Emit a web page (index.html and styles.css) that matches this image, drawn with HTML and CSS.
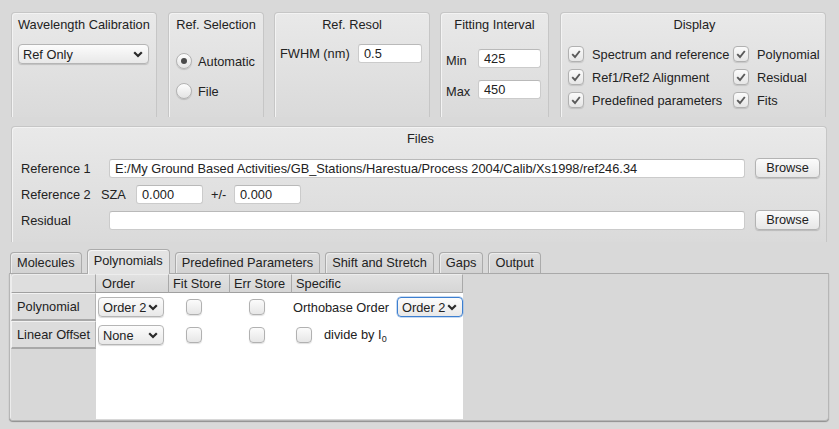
FILE: index.html
```html
<!DOCTYPE html>
<html>
<head>
<meta charset="utf-8">
<link rel="stylesheet" href="styles.css">
</head>
<body>
<div class="top">
  <section class="group g-wave">
    <div class="gtitle">Wavelength Calibration</div>
    <div class="combo wave-combo"><span>Ref Only</span><svg class="chev" width="10" height="7" viewBox="0 0 10 7"><path d="M1.2 1.2 L5 5 L8.8 1.2" fill="none" stroke="#2a2a2a" stroke-width="2.2"/></svg></div>
  </section>
  <section class="group g-refsel">
    <div class="gtitle">Ref. Selection</div>
    <div class="radio-row r1"><span class="radio checked"></span>Automatic</div>
    <div class="radio-row r2"><span class="radio"></span>File</div>
  </section>
  <section class="group g-resol">
    <div class="gtitle">Ref. Resol</div>
    <div class="field-row"><span class="flabel">FWHM (nm)</span><span class="input resol-in">0.5</span></div>
  </section>
  <section class="group g-fit">
    <div class="gtitle">Fitting Interval</div>
    <div class="fit-row f1"><span class="fit-label">Min</span><span class="input fit-in">425</span></div>
    <div class="fit-row f2"><span class="fit-label">Max</span><span class="input fit-in">450</span></div>
  </section>
  <section class="group g-display">
    <div class="gtitle">Display</div>
    <div class="disp-grid">
      <div class="chk-row"><span class="check"><svg width="14" height="14" viewBox="0 0 14 14"><path d="M3.2 7.2 L6 10 L10.8 4" fill="none" stroke="#5a5a5a" stroke-width="1.9"/></svg></span>Spectrum and reference</div>
      <div class="chk-row"><span class="check"><svg width="14" height="14" viewBox="0 0 14 14"><path d="M3.2 7.2 L6 10 L10.8 4" fill="none" stroke="#5a5a5a" stroke-width="1.9"/></svg></span>Polynomial</div>
      <div class="chk-row"><span class="check"><svg width="14" height="14" viewBox="0 0 14 14"><path d="M3.2 7.2 L6 10 L10.8 4" fill="none" stroke="#5a5a5a" stroke-width="1.9"/></svg></span>Ref1/Ref2 Alignment</div>
      <div class="chk-row"><span class="check"><svg width="14" height="14" viewBox="0 0 14 14"><path d="M3.2 7.2 L6 10 L10.8 4" fill="none" stroke="#5a5a5a" stroke-width="1.9"/></svg></span>Residual</div>
      <div class="chk-row"><span class="check"><svg width="14" height="14" viewBox="0 0 14 14"><path d="M3.2 7.2 L6 10 L10.8 4" fill="none" stroke="#5a5a5a" stroke-width="1.9"/></svg></span>Predefined parameters</div>
      <div class="chk-row"><span class="check"><svg width="14" height="14" viewBox="0 0 14 14"><path d="M3.2 7.2 L6 10 L10.8 4" fill="none" stroke="#5a5a5a" stroke-width="1.9"/></svg></span>Fits</div>
    </div>
  </section>
</div>

<section class="group files">
  <div class="gtitle">Files</div>
  <div class="frow">
    <span class="rlabel">Reference 1</span>
    <span class="input path-in">E:/My Ground Based Activities/GB_Stations/Harestua/Process 2004/Calib/Xs1998/ref246.34</span>
    <span class="button">Browse</span>
  </div>
  <div class="frow">
    <span class="rlabel short">Reference 2</span>
    <span class="sza">SZA</span>
    <span class="input sza-in">0.000</span>
    <span class="pm">+/-</span>
    <span class="input sza-in">0.000</span>
  </div>
  <div class="frow">
    <span class="rlabel">Residual</span>
    <span class="input path-in"></span>
    <span class="button">Browse</span>
  </div>
</section>

<div class="tabbar">
  <span class="tab">Molecules</span>
  <span class="tab active">Polynomials</span>
  <span class="tab">Predefined Parameters</span>
  <span class="tab">Shift and Stretch</span>
  <span class="tab">Gaps</span>
  <span class="tab">Output</span>
</div>
<div class="pane">
  <div class="table">
    <div class="hcell corner"></div>
    <div class="hcell h-order">Order</div>
    <div class="hcell">Fit Store</div>
    <div class="hcell">Err Store</div>
    <div class="hcell">Specific</div>

    <div class="vcell">Polynomial</div>
    <div class="cell"><div class="combo tcombo"><span>Order 2</span><svg class="chev" width="10" height="7" viewBox="0 0 10 7"><path d="M1.2 1.2 L5 5 L8.8 1.2" fill="none" stroke="#2a2a2a" stroke-width="2.2"/></svg></div></div>
    <div class="cell c-fit"><span class="check"></span></div>
    <div class="cell c-err"><span class="check"></span></div>
    <div class="cell c-spec"><span class="ortho">Orthobase Order</span><div class="combo tcombo focus"><span>Order 2</span><svg class="chev" width="10" height="7" viewBox="0 0 10 7"><path d="M1.2 1.2 L5 5 L8.8 1.2" fill="none" stroke="#2a2a2a" stroke-width="2.2"/></svg></div></div>

    <div class="vcell">Linear Offset</div>
    <div class="cell"><div class="combo tcombo"><span>None</span><svg class="chev" width="10" height="7" viewBox="0 0 10 7"><path d="M1.2 1.2 L5 5 L8.8 1.2" fill="none" stroke="#2a2a2a" stroke-width="2.2"/></svg></div></div>
    <div class="cell c-fit"><span class="check"></span></div>
    <div class="cell c-err"><span class="check"></span></div>
    <div class="cell c-spec2"><span class="check"></span><span class="divide">divide by I<sub>0</sub></span></div>

    <div class="vfill"></div>
    <div class="fill"></div>
  </div>
</div>
</body>
</html>
```

FILE: styles.css
```css
* { box-sizing: border-box; }
html, body { margin: 0; padding: 0; }
body {
  width: 839px;
  height: 429px;
  overflow: hidden;
  background: #d9d9d9;
  font-family: "Liberation Sans", Arial, sans-serif;
  font-size: 12.8px;
  color: #222;
  padding-top: 12px;
}

.top {
  display: flex;
  padding-left: 11px;
  height: 105px;
}
.group {
  background: linear-gradient(#e9e9e9, #dadada);
  border: 1px solid #c6c6c6;
  border-bottom: none;
  border-radius: 4px 4px 0 0;
  box-shadow: inset 1px 1px 0 #f3f3f3;
}
.top .group { height: 105px; }
.g-wave { width: 146px; margin-right: 11px; padding: 0 7px 0 6px; }
.g-refsel { width: 96px; margin-right: 10px; padding: 0 7px; }
.g-resol { width: 156px; margin-right: 10px; padding: 0 5px; }
.g-fit { width: 109px; margin-right: 11px; padding: 0 5px; }
.g-display { width: 266px; padding: 0 4px 0 7px; }

.gtitle {
  text-align: center;
  line-height: 16px;
  padding-top: 4px;
  height: 20px;
  white-space: nowrap;
}

.combo {
  display: flex;
  align-items: center;
  justify-content: space-between;
  height: 20px;
  padding: 0 5px 0 4px;
  background: linear-gradient(#fcfcfc, #e8e8e8);
  border: 1px solid #b5b5b5;
  border-radius: 4px;
  box-shadow: 0 1px 1px rgba(0,0,0,0.15);
  white-space: nowrap;
}
.chev { flex: none; }
.wave-combo { margin-top: 11px; width: 131px; }

.radio-row { display: flex; align-items: center; height: 16px; }
.radio-row.r1 { margin-top: 20px; }
.radio-row.r2 { margin-top: 14px; }
.radio {
  width: 16px; height: 16px;
  border-radius: 50%;
  border: 1px solid #b3b3b3;
  background: linear-gradient(#fdfdfd, #e4e4e4);
  box-shadow: 0 1px 1px rgba(0,0,0,0.15);
  margin-right: 6px;
  position: relative;
}
.radio.checked::after {
  content: "";
  position: absolute;
  left: 4px; top: 4px;
  width: 6px; height: 6px;
  border-radius: 50%;
  background: #4a4a4a;
}

.input {
  display: block;
  height: 19px;
  background: #fff;
  border: 1px solid #cbcbcb;
  border-top-color: #b9b9b9;
  border-radius: 3px;
  padding-left: 5px;
  line-height: 17px;
  white-space: nowrap;
  overflow: hidden;
}

.field-row { display: flex; align-items: center; margin-top: 11px; }
.flabel { width: 78px; }
.resol-in { width: 64px; }

.fit-row { display: flex; align-items: center; }
.fit-row.f1 { margin-top: 16px; }
.fit-row.f2 { margin-top: 12px; }
.fit-label { width: 32px; padding-top: 3px; }
.fit-in { width: 63px; }

.disp-grid {
  display: grid;
  grid-template-columns: 165px 1fr;
  row-gap: 7px;
  margin-top: 13px;
}
.chk-row { display: flex; align-items: center; height: 16px; white-space: nowrap; }
.check {
  flex: none;
  display: flex;
  align-items: center;
  justify-content: center;
  width: 16px; height: 16px;
  border: 1px solid #b1b1b1;
  border-radius: 4px;
  background: linear-gradient(#fbfbfb, #e6e6e6);
  box-shadow: 0 1px 1px rgba(0,0,0,0.12);
}
.chk-row .check { margin-right: 8px; }

/* Files */
.files {
  margin: 9px 12px 0 11px;
  height: 116px;
  padding: 0 6px 0 9px;
}
.files .gtitle { margin-bottom: 11px; }
.frow { display: flex; align-items: center; height: 20px; margin-bottom: 6px; }
.rlabel { width: 88px; flex: none; }
.rlabel.short { width: 80px; }
.path-in { width: 637px; }
.button {
  margin-left: 10px;
  width: 65px;
  height: 20px;
  line-height: 18px;
  text-align: center;
  background: linear-gradient(#fbfbfb, #e7e7e7);
  border: 1px solid #b3b3b3;
  border-radius: 4px;
  box-shadow: 0 1px 1px rgba(0,0,0,0.15);
}
.sza { width: 35px; }
.sza-in { width: 67px; height: 19px; }
.pm { width: 31px; padding-left: 8px; }

/* Tabs */
.tabbar {
  display: flex;
  align-items: flex-end;
  gap: 5px;
  margin: 7px 0 0 10px;
  height: 24px;
  position: relative;
  z-index: 1;
}
.tab {
  height: 21px;
  padding: 0 6px;
  line-height: 20px;
  background: linear-gradient(#dedede, #d2d2d2);
  border: 1px solid #ababab;
  border-bottom: none;
  border-radius: 4px 4px 0 0;
  box-shadow: inset 1px 1px 0 #ececec;
  white-space: nowrap;
}
.tab.active {
  height: 25px;
  line-height: 22px;
  background: #e3e3e3;
  margin-bottom: -1px;
  box-shadow: inset 1px 1px 0 #f6f6f6;
}

.pane {
  margin: 0 10px 0 9px;
  height: 148px;
  border: 1px solid #b6b6b6;
  border-top-color: #a9a9a9;
  border-radius: 0 0 4px 4px;
  background: #d8d8d8;
  box-shadow: inset 1px 0 0 #ececec, 0 1px 1px rgba(0,0,0,0.35);
  padding: 0 1px 1px 1px;
}

.table {
  display: grid;
  grid-template-columns: 85px 73px 61px 62px 171px;
  grid-template-rows: 19px 28px 28px 1fr;
  width: 452px;
  height: 145px;
}
.hcell {
  background: linear-gradient(#e1e1e1, #d6d6d6);
  border-right: 1px solid #a9a9a9;
  border-bottom: 1px solid #a0a0a0;
  border-top: 1px solid #ededed;
  line-height: 17px;
  padding-left: 4px;
  white-space: nowrap;
}
.hcell.corner {
  border-radius: 4px 0 0 0;
  border-left: 1px solid #ededed;
  background: #dedede;
}
.h-order { padding-left: 6px; }
.vcell {
  background: #dcdcdc;
  border-top: 1px solid #f2f2f2;
  border-left: 1px solid #f2f2f2;
  border-right: 1px solid #b4b4b4;
  border-bottom: 2px solid #a8a8a8;
  display: flex;
  align-items: center;
  padding-left: 5px;
  white-space: nowrap;
}
.cell {
  background: #fff;
  display: flex;
  align-items: center;
}
.tcombo { width: 66px; margin-left: 2px; }
.c-fit { padding-left: 17px; }
.c-err { padding-left: 19px; }
.c-spec { padding-left: 1px; }
.ortho { width: 102px; }
.tcombo.focus {
  border: 1.5px solid #3d7fd0;
  box-shadow: 0 0 0 0.5px #8db6e6;
}
.c-spec2 { padding-left: 4px; }
.c-spec2 .check { margin-right: 12px; }
.divide sub { font-size: 9px; vertical-align: -3px; }
.vfill { background: #d8d8d8; }
.fill { grid-column: 2 / 6; background: #fff; }
```
